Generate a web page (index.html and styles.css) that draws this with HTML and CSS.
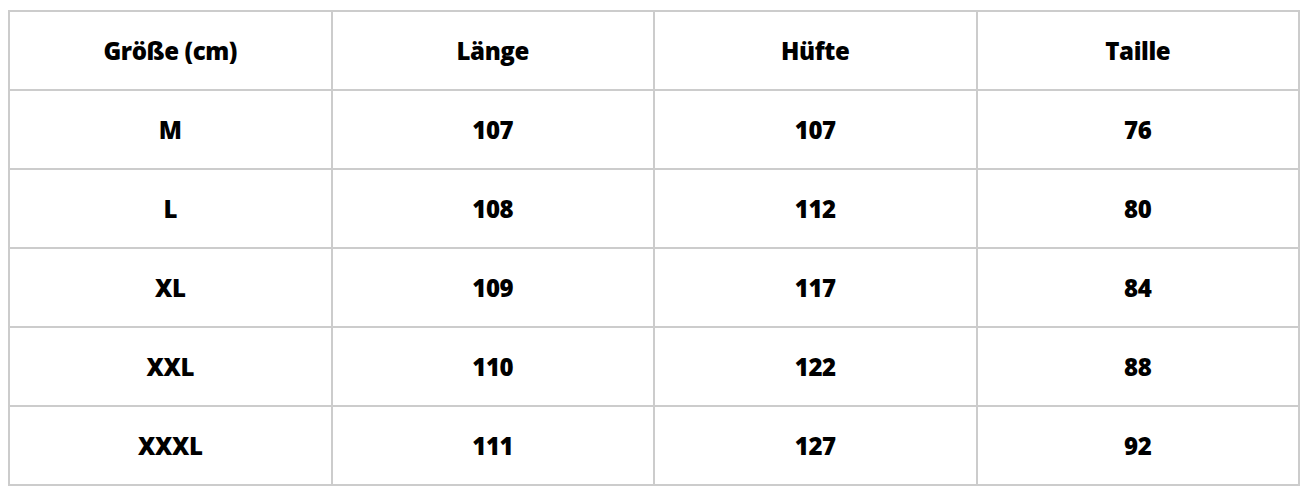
FILE: index.html
```html
<!DOCTYPE html>
<html lang="de">
<head>
<meta charset="utf-8">
<title>Größentabelle</title>
<link rel="stylesheet" href="styles.css">
</head>
<body>
<table class="size-table">
  <thead>
    <tr><th>Größe (cm)</th><th>Länge</th><th>Hüfte</th><th>Taille</th></tr>
  </thead>
  <tbody>
    <tr><td>M</td><td>107</td><td>107</td><td>76</td></tr>
    <tr><td>L</td><td>108</td><td>112</td><td>80</td></tr>
    <tr><td>XL</td><td>109</td><td>117</td><td>84</td></tr>
    <tr><td>XXL</td><td>110</td><td>122</td><td>88</td></tr>
    <tr><td>XXXL</td><td>111</td><td>127</td><td>92</td></tr>
  </tbody>
</table>
</body>
</html>
```
FILE: styles.css
```css
body {
  margin: 10px 8px;
  background: #fff;
  font-family: "Open Sans", "Liberation Sans", sans-serif;
  color: #000;
}
.size-table {
  width: 1292px;
  border-collapse: collapse;
  table-layout: fixed;
}
.size-table th,
.size-table td {
  border: 2px solid #cccccc;
  height: 77px;
  padding: 0;
  text-align: center;
  vertical-align: middle;
  font-weight: 800;
  font-size: 24px;
  line-height: 30px;
  letter-spacing: -0.4px;
}
```
